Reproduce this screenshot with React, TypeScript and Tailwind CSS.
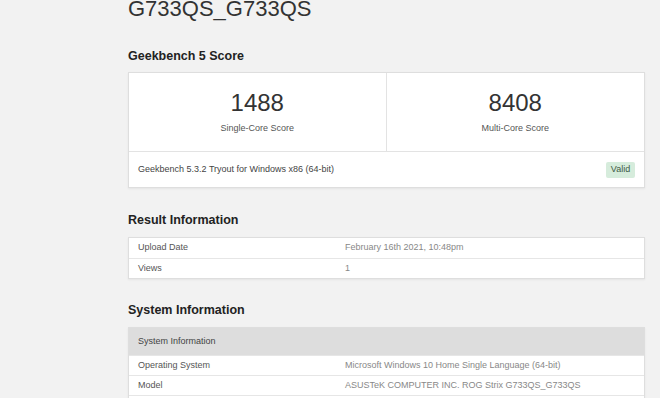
export default function App() {
  const resultRows = [
    { label: 'Upload Date', value: 'February 16th 2021, 10:48pm' },
    { label: 'Views', value: '1' },
  ];

  const systemRows = [
    { label: 'Operating System', value: 'Microsoft Windows 10 Home Single Language (64-bit)' },
    { label: 'Model', value: 'ASUSTeK COMPUTER INC. ROG Strix G733QS_G733QS' },
  ];

  return (
    <div
      className="h-[398px] w-[660px] overflow-hidden bg-[#f2f2f2] pl-[128px]"
      style={{ fontFamily: '"Liberation Sans", Arial, sans-serif' }}
    >
      <div className="w-[517px]">
        {/* Title */}
        <h1 className="text-[22px] leading-[18px] text-[#333]">G733QS_G733QS</h1>

        {/* Geekbench Score */}
        <h2 className="mt-[31px] text-[12.5px] font-bold leading-[15px] text-[#222]">Geekbench 5 Score</h2>
        <div className="mt-[8px] border border-[#dedede] bg-white shadow-[0_1px_2px_rgba(0,0,0,0.06)]">
          <div className="grid grid-cols-2 border-b border-[#e3e3e3]">
            <div className="h-[78px] border-r border-[#e3e3e3] pt-[18px] text-center">
              <div className="text-[24px] leading-[24px] text-[#333]">1488</div>
              <div className="mt-[8px] text-[9px] leading-[11px] text-[#555]">Single-Core Score</div>
            </div>
            <div className="h-[78px] pt-[18px] text-center">
              <div className="text-[24px] leading-[24px] text-[#333]">8408</div>
              <div className="mt-[8px] text-[9px] leading-[11px] text-[#555]">Multi-Core Score</div>
            </div>
          </div>
          <div className="flex h-[35px] items-center justify-between pl-[9px] pr-[9px]">
            <span className="text-[9px] text-[#444]">Geekbench 5.3.2 Tryout for Windows x86 (64-bit)</span>
            <span className="flex h-[16px] w-[29px] items-center justify-center rounded-[2px] bg-[#d6ecdc] text-[9px] text-[#3d5a45]">
              Valid
            </span>
          </div>
        </div>

        {/* Result Information */}
        <h2 className="mt-[25px] text-[12.5px] font-bold leading-[15px] text-[#222]">Result Information</h2>
        <div className="mt-[9px] border border-[#dedede] bg-white shadow-[0_1px_2px_rgba(0,0,0,0.06)]">
          {resultRows.map((row, i) => (
            <div
              key={row.label}
              className={`flex h-[20px] items-center text-[9px] ${i > 0 ? 'border-t border-[#e6e6e6]' : ''}`}
            >
              <span className="w-[216px] pl-[9px] text-[#555]">{row.label}</span>
              <span className="text-[#888]">{row.value}</span>
            </div>
          ))}
        </div>

        {/* System Information */}
        <h2 className="mt-[24px] text-[12.5px] font-bold leading-[15px] text-[#222]">System Information</h2>
        <div className="mt-[9px] border border-[#dedede] bg-white shadow-[0_1px_2px_rgba(0,0,0,0.06)]">
          <div className="flex h-[27px] items-center bg-[#dddddd] pl-[9px] text-[9px] text-[#444]">System Information</div>
          {systemRows.map((row) => (
            <div key={row.label} className="flex h-[20px] items-center border-t border-[#e6e6e6] text-[9px]">
              <span className="w-[216px] pl-[9px] text-[#555]">{row.label}</span>
              <span className="text-[#888]">{row.value}</span>
            </div>
          ))}
          <div className="h-[20px] border-t border-[#e6e6e6]" />
        </div>
      </div>
    </div>
  );
}
